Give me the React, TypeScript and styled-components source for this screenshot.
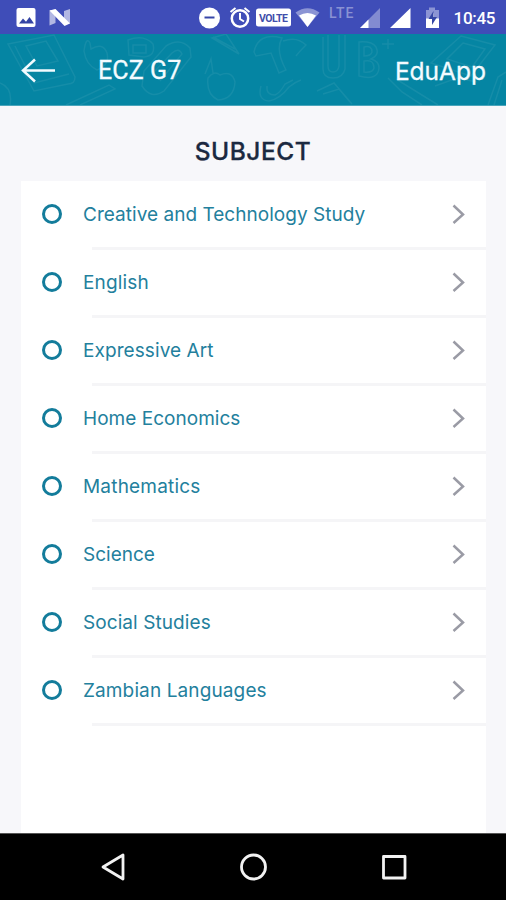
import React from "react";
import styled, { createGlobalStyle } from "styled-components";

const GlobalStyle = createGlobalStyle`
  * { box-sizing: border-box; }
  body { margin: 0; background: #f7f7fa; font-family: Roboto, "Noto Sans", sans-serif; }
`;

const Screen = styled.div`
  display: flex;
  flex-direction: column;
  width: 506px;
  height: 900px;
  overflow: hidden;
  background: #f7f7fa;
`;

const StatusBar = styled.div`
  height: 34px;
  flex: none;
  background: #3f4db8;
`;

const Header = styled.header`
  position: relative;
  flex: none;
  display: flex;
  align-items: center;
  height: 72px;
  padding: 2px 20px 0 21px;
  background: #0585a3;
  border-bottom: 1px solid #4aa5bb;
`;

const Pattern = styled.svg`
  position: absolute;
  inset: 0;
  fill: none;
  stroke: #2c98b1;
  stroke-width: 1.5;
  opacity: 0.42;
`;

const BackButton = styled.button`
  position: relative;
  display: flex;
  width: 35px;
  height: 26px;
  margin: 0 42px 0 0;
  padding: 0;
  border: 0;
  background: none;
`;

const HeaderText = styled.span<{ $spacing: number }>`
  position: relative;
  font-size: 25px;
  line-height: 30px;
  letter-spacing: ${(p) => p.$spacing}px;
  color: #f3fbff;
  -webkit-text-stroke: 0.3px #f3fbff;
  white-space: nowrap;
`;

const AppName = styled(HeaderText)`
  margin-left: auto;
  font-family: Inter, sans-serif;
  font-size: 24.5px;
`;

const Title = styled.h1`
  flex: none;
  height: 75px;
  margin: 0;
  padding-top: 30px;
  text-align: center;
  font-family: Inter, sans-serif;
  font-size: 24.5px;
  line-height: 30px;
  font-weight: 500;
  letter-spacing: 0.5px;
  color: #1b2940;
  -webkit-text-stroke: 0.3px #1b2940;
`;

const Card = styled.ul`
  flex: 1;
  margin: 0 20px 0 21px;
  padding: 1px 0 0;
  list-style: none;
  background: #fff;
`;

const Row = styled.li`
  display: grid;
  grid-template-columns: 62px 1fr 34px;
  grid-template-rows: 64px 4px;
  align-items: center;
`;

const Ring = styled.span`
  width: 20px;
  height: 20px;
  margin-left: 21px;
  border: 3px solid #137c9b;
  border-radius: 50%;
`;

const Label = styled.span<{ $spacing: number }>`
  padding-top: 2px;
  font-family: Inter, sans-serif;
  font-size: 19px;
  line-height: 24px;
  letter-spacing: ${(p) => p.$spacing}px;
  color: #23809d;
  white-space: nowrap;
`;

const Divider = styled.span`
  grid-column: 1 / -1;
  height: 3px;
  margin-left: 71px;
  background: #f5f5f7;
`;

const NavBar = styled.nav`
  flex: none;
  display: flex;
  height: 67px;
  background: #000;
  border-top: 1px solid #555;
`;

const subjects: { name: string; spacing: number }[] = [
  { name: "Creative and Technology Study", spacing: 0.03 },
  { name: "English", spacing: 0.15 },
  { name: "Expressive Art", spacing: 0.08 },
  { name: "Home Economics", spacing: 0.03 },
  { name: "Mathematics", spacing: 0.2 },
  { name: "Science", spacing: 0 },
  { name: "Social Studies", spacing: 0.08 },
  { name: "Zambian Languages", spacing: 0.12 },
];

const StatusIcons = () => (
  <svg width="506" height="34" viewBox="0 0 506 34" fill="#fff">
    <rect x="16.5" y="8" width="19" height="19" rx="2" />
    <path d="M19 23.5l4-5 3 3.2 3.5-4.7 4.5 6.5z" fill="#3444a4" />
    <path d="M49.500 10.500l6-1v13.500l-6 2.500zM64 11l6-2v14.500l-6-1z" opacity=".6" />
    <path d="M49.500 10.500l6-1.500 14.500 14.500-5.500 2.500z" />
    <circle cx="209.5" cy="18" r="10.5" />
    <path d="M204.5 17.500h10" stroke="#3747a8" strokeWidth="2" />
    <g fill="none" stroke="#fff" strokeWidth="2.5">
      <circle cx="240" cy="18.500" r="8.200" />
      <path d="M230.500 12l5-4M249.500 12l-5-4M240 13v6l4 2.500" strokeWidth="2" />
    </g>
    <rect x="256" y="8.500" width="35" height="18" rx="2.500" />
    <text x="259" y="21.500" fontSize="10.500" fontWeight="700" textLength="29" fill="#414eaa">VOLTE</text>
    <path d="M295.500 12.500Q307.500 4 319.500 12.500L307.500 27z" opacity=".4" />
    <path d="M299 15.500Q307.500 10.500 316 15.500L307.500 27z" />
    <text x="329" y="18" fontSize="14" fontWeight="500" textLength="24.500" fill="#8a92d3">LTE</text>
    <path d="M360 28L380 8v20z" opacity=".35" />
    <path d="M360 28l8.500-8.500v8.500zM390 28L410.500 8v20z" />
    <path d="M426 10h3V7.500h6V10h4v18h-13z" opacity=".4" />
    <path d="M426 18.500h4l4-6v6h5V28h-13z" />
    <path d="M433.500 11l-5 8h3.500v6l5-8h-3.500z" fill="#3546a5" />
    <text x="453.500" y="24" fontSize="17" fontWeight="500" textLength="42">10:45</text>
  </svg>
);

const HeaderPattern = () => (
  <Pattern width="506" height="71" viewBox="0 0 506 71">
    <path d="M8 10L54 1 75 43q0 7-7 7l-34 7zM26 12l20-5 12 20-21 5zM34 49l35-9M15 12l19 37" />
    <path d="M0 49q13 5 10 22M66 71l43-20 6 4-35 16" />
    <path d="M84 17q2-15 6-8l1 6q12-7 16 4 3 12-10 17-11-5-13-19z" />
    <path d="M128 6q16-6 25 4 3 12-9 13l-15-2zM133 11h13v8h-13zM144 37l22-25q14-9 24 2l1 9-27 34q-13 9-22-5zM153 39l19-20q7-6 10 1l-22 27" />
    <path d="M212 4l14-4 13 20zM213 3l22 12M205 40l6-15 2 14M208 44q6-8 12-3 12-5 15 7-1 17-17 18-12-6-10-22z" />
    <path d="M254 18q4-20 28-14-7 12 4 32l-7 3-8-20-15 3zM283 7q14-5 23 4-7 7-10 11" />
    <path d="M323 3v32q0 9 10 9t12-9V1M328 1v31q0 6 5 6t6-6V1M359 8v34q19 5 20-8 0-7-8-9 9-4 5-12-4-6-17-5zM364 13q8-2 8 5-1 4-8 4zM364 27q10-2 10 7-1 5-10 4zM382 10h12M388 5v10" />
    <path d="M261 52q-4 14 8 15 11-2 20-14 6-5 12-7M267 52q-1 9 8 9 5-2 10-11l8-4M317 57l17-8 18 21M323 60l16-5 11 13" />
    <path d="M461 2l34 9-24 31-40-13zM463 9l22 6-13 18-25-8zM435 52l22-8 20 4M388 44l14 14 20 13M396 45l42 26" />
    <path d="M488 71l10-28 8-5M494 71l8-25" />
  </Pattern>
);

export default function App() {
  return (
    <>
      <GlobalStyle />
      <Screen>
        <StatusBar><StatusIcons /></StatusBar>
        <Header>
          <HeaderPattern />
          <BackButton aria-label="Back">
            <svg width="35" height="26" viewBox="0 0 35 26" fill="none" stroke="#f3fbff" strokeWidth="2.500">
              <path d="M14 1.500L2 12.500l12 11M2 12.500h32" />
            </svg>
          </BackButton>
          <HeaderText $spacing={0.1}>ECZ G7</HeaderText>
          <AppName $spacing={0}>EduApp</AppName>
        </Header>
        <Title>SUBJECT</Title>
        <Card>
          {subjects.map((s) => (
            <Row key={s.name}>
              <Ring />
              <Label $spacing={s.spacing}>{s.name}</Label>
              <svg width="14" height="20" viewBox="0 0 14 20" fill="none" stroke="#9a9ba5" strokeWidth="2.500">
                <path d="M1.500 1.500L11 10.500l-9.500 8.500" />
              </svg>
              <Divider />
            </Row>
          ))}
        </Card>
        <NavBar>
          <svg width="506" height="66" viewBox="0 0 506 66" fill="none" stroke="#f2f2f2" strokeWidth="2.800" strokeLinejoin="round">
            <path d="M103 33l20-12v24z" />
            <circle cx="253.500" cy="33" r="12" />
            <rect x="383.500" y="22.500" width="21.500" height="21.500" />
          </svg>
        </NavBar>
      </Screen>
    </>
  );
}
